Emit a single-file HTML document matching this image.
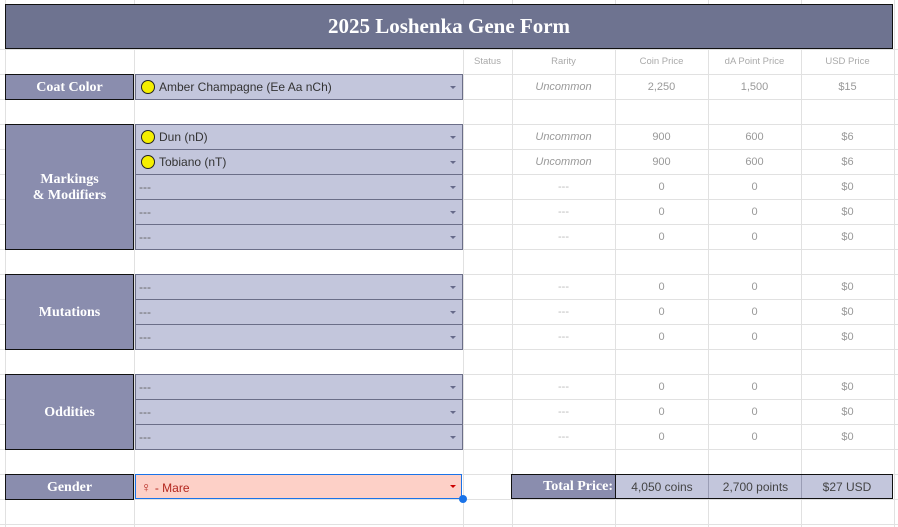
<!DOCTYPE html>
<html><head><meta charset="utf-8"><style>
body{margin:0;width:898px;height:527px;position:relative;overflow:hidden;background:#fff;font-family:"Liberation Sans",sans-serif}
.v{position:absolute;top:0;height:527px;width:1px;background:#e1e1e1}
.h{position:absolute;left:0;width:898px;height:1px;background:#e1e1e1}
.lab{position:absolute;left:5px;width:129px;box-sizing:border-box;background:#8a8dae;border:1.5px solid #111;color:#fff;font-family:"Liberation Serif",serif;font-weight:bold;font-size:14px;display:flex;align-items:center;justify-content:center;text-align:center;line-height:16px;padding-top:2px}
.dd{position:absolute;left:135px;width:326px;height:24px;background:#c3c6dc;border:1px solid #6b6e88;box-sizing:content-box;font-size:12px;color:#333;line-height:24px}
.dd span.t{position:absolute;left:23px}
.dd span.d{position:absolute;left:3px;color:#666}
.dd:after{content:"";position:absolute;right:6px;top:11px;border-left:3.5px solid transparent;border-right:3.5px solid transparent;border-top:3.5px solid #666a8a}
.dot{position:absolute;left:5px;top:5px;width:12px;height:12px;border-radius:50%;background:#f5ef00;border:1px solid #222}
.c{position:absolute;font-size:11px;color:#999;text-align:center;line-height:26px}
.hd{font-size:9.5px;color:#aaa}
.i{font-style:italic}
</style></head><body>
<div class="v" style="left:5px"></div><div class="v" style="left:134px"></div><div class="v" style="left:463px"></div><div class="v" style="left:512px"></div><div class="v" style="left:615px"></div><div class="v" style="left:708px"></div><div class="v" style="left:801px"></div><div class="v" style="left:894px"></div>
<div class="h" style="top:49px"></div><div class="h" style="top:74px"></div><div class="h" style="top:99px"></div><div class="h" style="top:124px"></div><div class="h" style="top:149px"></div><div class="h" style="top:174px"></div><div class="h" style="top:199px"></div><div class="h" style="top:224px"></div><div class="h" style="top:249px"></div><div class="h" style="top:274px"></div><div class="h" style="top:299px"></div><div class="h" style="top:324px"></div><div class="h" style="top:349px"></div><div class="h" style="top:374px"></div><div class="h" style="top:399px"></div><div class="h" style="top:424px"></div><div class="h" style="top:449px"></div><div class="h" style="top:474px"></div><div class="h" style="top:499px"></div><div class="h" style="top:524px"></div>

<div style="position:absolute;left:5px;top:4px;width:886px;height:43px;background:#6e7390;border:1.5px solid #111;color:#fff;font-family:'Liberation Serif',serif;font-weight:bold;font-size:21px;display:flex;align-items:center;justify-content:center">2025 Loshenka Gene Form</div>

<div class="c hd" style="left:463px;width:49px;top:49px">Status</div>
<div class="c hd" style="left:512px;width:103px;top:49px">Rarity</div>
<div class="c hd" style="left:615px;width:93px;top:49px">Coin Price</div>
<div class="c hd" style="left:708px;width:93px;top:49px">dA Point Price</div>
<div class="c hd" style="left:801px;width:93px;top:49px">USD Price</div>

<div class="lab" style="top:74px;height:26px">Coat Color</div>
<div class="lab" style="top:124px;height:126px">Markings<br>&amp; Modifiers</div>
<div class="lab" style="top:274px;height:76px">Mutations</div>
<div class="lab" style="top:374px;height:76px">Oddities</div>
<div class="lab" style="top:474px;height:26px">Gender</div>

<div class="dd" style="top:74px"><i class="dot"></i><span class="t">Amber Champagne (Ee Aa nCh)</span></div>
<div class="dd" style="top:124px"><i class="dot"></i><span class="t">Dun (nD)</span></div>
<div class="dd" style="top:149px"><i class="dot"></i><span class="t">Tobiano (nT)</span></div>
<div class="dd" style="top:174px"><span class="d">---</span></div>
<div class="dd" style="top:199px"><span class="d">---</span></div>
<div class="dd" style="top:224px"><span class="d">---</span></div>
<div class="dd" style="top:274px"><span class="d">---</span></div>
<div class="dd" style="top:299px"><span class="d">---</span></div>
<div class="dd" style="top:324px"><span class="d">---</span></div>
<div class="dd" style="top:374px"><span class="d">---</span></div>
<div class="dd" style="top:399px"><span class="d">---</span></div>
<div class="dd" style="top:424px"><span class="d">---</span></div>

<div style="position:absolute;left:135px;top:474px;width:325px;height:23px;background:#fdd0c7;border:1.5px solid #1a73e8;font-size:12px;color:#b3261e;line-height:24px"><span style="position:absolute;left:5px"><span style="font-size:14px">♀</span> - Mare</span><span style="position:absolute;right:5px;top:10px;border-left:3.5px solid transparent;border-right:3.5px solid transparent;border-top:3.5px solid #c00"></span></div>
<div style="position:absolute;left:459px;top:495px;width:8px;height:8px;border-radius:50%;background:#1a73e8"></div>

<div class="c i" style="left:512px;width:103px;top:74px">Uncommon</div><div class="c" style="left:615px;width:93px;top:74px">2,250</div><div class="c" style="left:708px;width:93px;top:74px">1,500</div><div class="c" style="left:801px;width:93px;top:74px">$15</div>
<div class="c i" style="left:512px;width:103px;top:124px">Uncommon</div><div class="c" style="left:615px;width:93px;top:124px">900</div><div class="c" style="left:708px;width:93px;top:124px">600</div><div class="c" style="left:801px;width:93px;top:124px">$6</div>
<div class="c i" style="left:512px;width:103px;top:149px">Uncommon</div><div class="c" style="left:615px;width:93px;top:149px">900</div><div class="c" style="left:708px;width:93px;top:149px">600</div><div class="c" style="left:801px;width:93px;top:149px">$6</div>
<div class="c" style="left:512px;width:103px;top:174px;color:#bbb">---</div><div class="c" style="left:615px;width:93px;top:174px">0</div><div class="c" style="left:708px;width:93px;top:174px">0</div><div class="c" style="left:801px;width:93px;top:174px">$0</div>
<div class="c" style="left:512px;width:103px;top:199px;color:#bbb">---</div><div class="c" style="left:615px;width:93px;top:199px">0</div><div class="c" style="left:708px;width:93px;top:199px">0</div><div class="c" style="left:801px;width:93px;top:199px">$0</div>
<div class="c" style="left:512px;width:103px;top:224px;color:#bbb">---</div><div class="c" style="left:615px;width:93px;top:224px">0</div><div class="c" style="left:708px;width:93px;top:224px">0</div><div class="c" style="left:801px;width:93px;top:224px">$0</div>
<div class="c" style="left:512px;width:103px;top:274px;color:#bbb">---</div><div class="c" style="left:615px;width:93px;top:274px">0</div><div class="c" style="left:708px;width:93px;top:274px">0</div><div class="c" style="left:801px;width:93px;top:274px">$0</div>
<div class="c" style="left:512px;width:103px;top:299px;color:#bbb">---</div><div class="c" style="left:615px;width:93px;top:299px">0</div><div class="c" style="left:708px;width:93px;top:299px">0</div><div class="c" style="left:801px;width:93px;top:299px">$0</div>
<div class="c" style="left:512px;width:103px;top:324px;color:#bbb">---</div><div class="c" style="left:615px;width:93px;top:324px">0</div><div class="c" style="left:708px;width:93px;top:324px">0</div><div class="c" style="left:801px;width:93px;top:324px">$0</div>
<div class="c" style="left:512px;width:103px;top:374px;color:#bbb">---</div><div class="c" style="left:615px;width:93px;top:374px">0</div><div class="c" style="left:708px;width:93px;top:374px">0</div><div class="c" style="left:801px;width:93px;top:374px">$0</div>
<div class="c" style="left:512px;width:103px;top:399px;color:#bbb">---</div><div class="c" style="left:615px;width:93px;top:399px">0</div><div class="c" style="left:708px;width:93px;top:399px">0</div><div class="c" style="left:801px;width:93px;top:399px">$0</div>
<div class="c" style="left:512px;width:103px;top:424px;color:#bbb">---</div><div class="c" style="left:615px;width:93px;top:424px">0</div><div class="c" style="left:708px;width:93px;top:424px">0</div><div class="c" style="left:801px;width:93px;top:424px">$0</div>

<div style="position:absolute;left:511px;top:474px;width:101px;height:23px;background:#8a8dae;border:1.5px solid #111;color:#fff;font-family:'Liberation Serif',serif;font-weight:bold;font-size:14px;line-height:24px;text-align:right;padding-right:2px;box-sizing:content-box">Total Price:</div>
<div style="position:absolute;left:615px;top:474px;width:276px;height:23px;background:#c3c6dc;border:1.5px solid #111;font-size:12px;color:#444;line-height:24px">
<span style="position:absolute;left:0;width:92px;text-align:center">4,050 coins</span>
<span style="position:absolute;left:92px;width:1px;height:23px;background:#9a9db5"></span>
<span style="position:absolute;left:93px;width:93px;text-align:center">2,700 points</span>
<span style="position:absolute;left:185px;width:1px;height:23px;background:#9a9db5"></span>
<span style="position:absolute;left:186px;width:90px;text-align:center">$27 USD</span>
</div>
</body></html>
